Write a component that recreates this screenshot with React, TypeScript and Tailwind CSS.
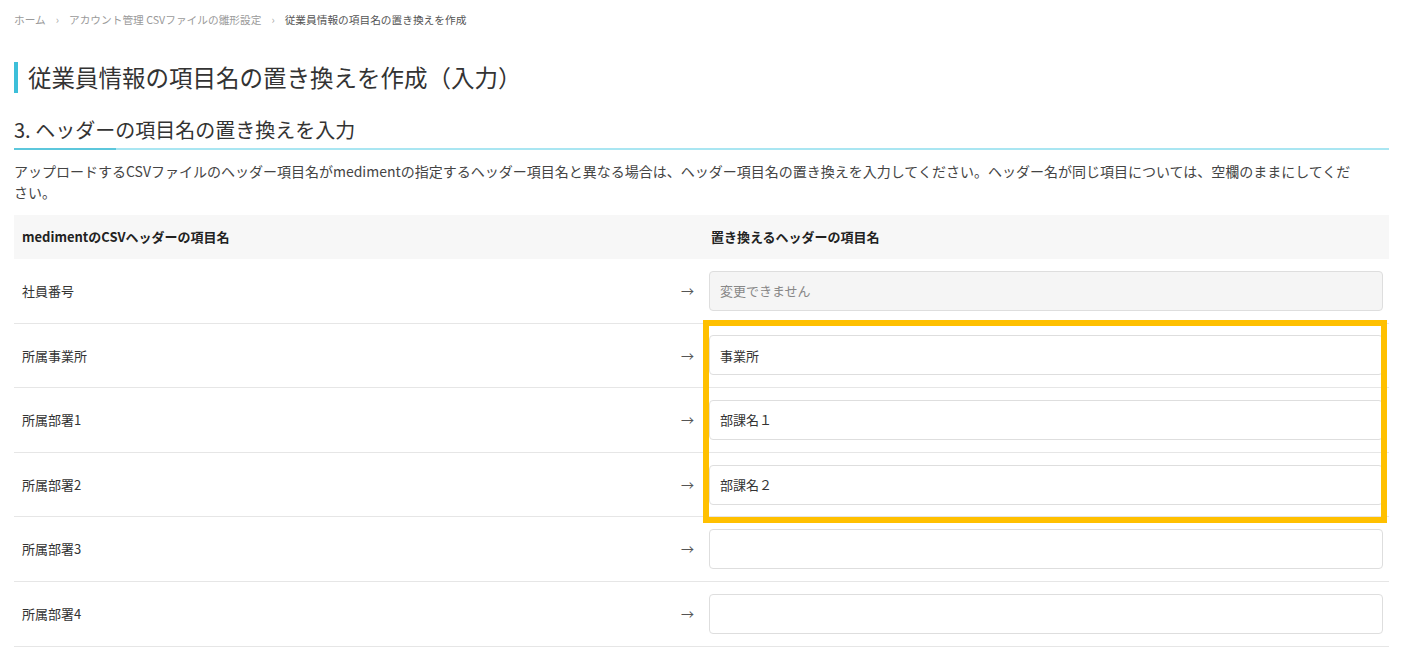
import React from "react";

// 従業員情報 — ヘッダー項目名の置き換え入力画面

interface Row {
  label: string;
  value?: string;
  disabled?: boolean;
}

const ROWS: Row[] = [
  { label: "社員番号", value: "変更できません", disabled: true },
  { label: "所属事業所", value: "事業所" },
  { label: "所属部署1", value: "部課名１" },
  { label: "所属部署2", value: "部課名２" },
  { label: "所属部署3" },
  { label: "所属部署4" },
];

function Breadcrumb() {
  return (
    <nav className="flex h-4 items-center text-[10.7px] leading-4 text-[#9a9a9a]">
      <span>ホーム</span>
      <span className="mx-[10px] text-[#aaa]">›</span>
      <span>アカウント管理 CSVファイルの雛形設定</span>
      <span className="mx-[10px] text-[#aaa]">›</span>
      <span className="text-[#555]">従業員情報の項目名の置き換えを作成</span>
    </nav>
  );
}

function FieldRow({ row }: { row: Row }) {
  return (
    <div className="flex h-[64.6px] items-center border-b border-[#e6e6e6]">
      <div className="flex-1 pl-2 text-[13px] text-[#333]">{row.label}</div>
      <span className="mr-[15px] text-[13px] text-[#555]">→</span>
      <input
        readOnly
        defaultValue={row.value ?? ""}
        className={
          row.disabled
            ? "mr-[6px] h-10 w-[674px] rounded-[4px] border border-[#dedede] bg-[#f5f5f5] px-[10px] text-[13px] text-[#888] outline-none"
            : "mr-[6px] h-10 w-[674px] rounded-[4px] border border-[#dedede] bg-white px-[10px] text-[13px] text-[#333] outline-none"
        }
      />
    </div>
  );
}

export default function App() {
  return (
    <div className="min-h-screen w-[1420px] bg-white font-['Noto_Sans_CJK_JP','Noto_Sans',sans-serif] text-[#333]">
      <div className="w-[1389px] pl-[14px] pt-3">
        <Breadcrumb />

        <h1 className="mt-[34px] h-[31px] border-l-4 border-[#3dbfd9] pl-[10px] text-[23.5px] leading-[31px] text-[#333]">
          従業員情報の項目名の置き換えを作成（入力）
        </h1>

        <h2 className="mt-[23px] text-[20px] leading-[28px] text-[#333]">
          3. ヘッダーの項目名の置き換えを入力
        </h2>
        <div className="mt-1 flex h-[2px]">
          <div className="w-[102px] bg-[#5cc7dc]" />
          <div className="flex-1 bg-[#a9e6f2]" />
        </div>

        <p className="mt-[11px] text-[14px] leading-[21px] text-[#444]">
          アップロードするCSVファイルのヘッダー項目名がmedimentの指定するヘッダー項目名と異なる場合は、ヘッダー項目名の置き換えを入力してください。ヘッダー名が同じ項目については、空欄のままにしてくだ
          <br />
          さい。
        </p>

        <div className="relative mt-3">
          <div className="flex h-[44px] items-center bg-[#f7f7f7] text-[13px] font-bold text-[#222]">
            <div className="flex-1 pl-2">medimentのCSVヘッダーの項目名</div>
            <div className="w-[680px] pl-[2px]">置き換えるヘッダーの項目名</div>
          </div>

          {ROWS.map((row) => (
            <FieldRow key={row.label} row={row} />
          ))}

          {/* 注釈の黄色い枠 */}
          <div className="pointer-events-none absolute left-[689px] top-[105px] h-[203px] w-[684px] border-[6px] border-[#ffc000]" />
        </div>
      </div>
    </div>
  );
}
